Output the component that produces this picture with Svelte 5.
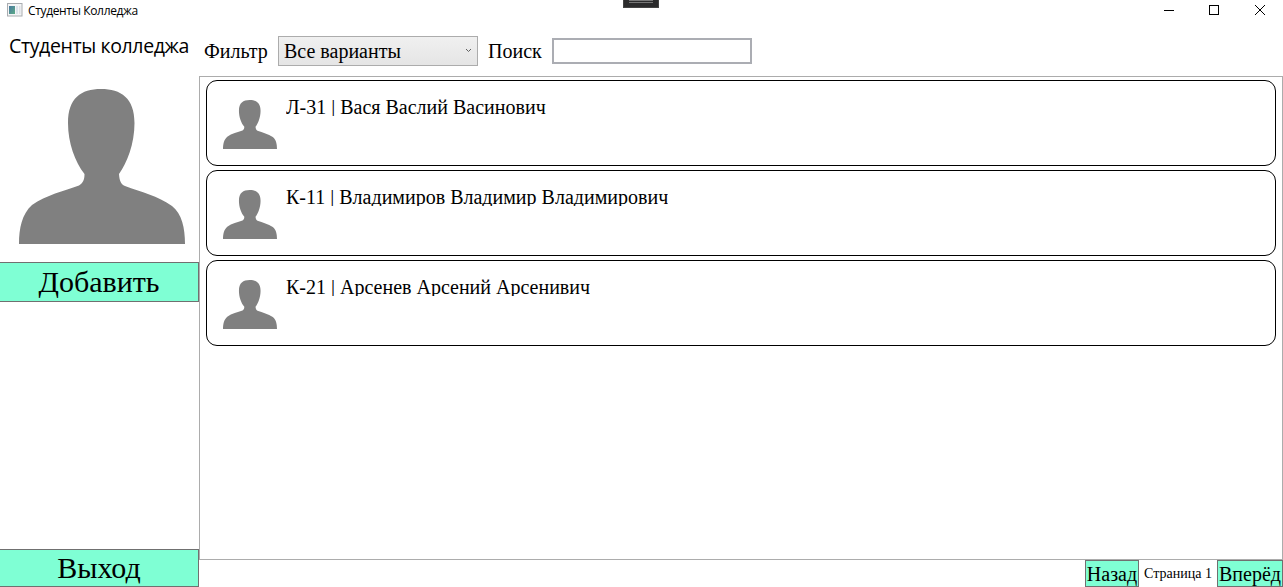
<script>
  const students = [
    'Л-31 | Вася Васлий Васинович',
    'К-11 | Владимиров Владимир Владимирович',
    'К-21 | Арсенев Арсений Арсенивич'
  ];
  let search = $state('');
</script>

{#snippet person(cls)}
  <svg class={cls} viewBox="0 0 166 155" preserveAspectRatio="none" aria-hidden="true">
    <path fill="#808080" d="M82 0C102 0 115.500 9 115.500 34C115.500 55 108 74 100 85C100.500 91 101.500 95 106 97C122 103 139 107 153 117C163 125 166 139 166 155H0C0 139 3 125 13 116C27 106 45 102 60 96.500C64 94 65.500 91 65.500 85C56 73 49 54 49 34C49 9 62 0 82 0Z" />
  </svg>
{/snippet}

<div class="window">
  <header class="titlebar">
    <svg class="app-icon" viewBox="0 0 16 14" aria-hidden="true">
      <defs>
        <linearGradient id="pane" x1="0" y1="0" x2="1" y2="1">
          <stop offset="0" stop-color="#4878a0" />
          <stop offset="1" stop-color="#5cab86" />
        </linearGradient>
      </defs>
      <rect x="0.500" y="0.500" width="14.500" height="12.500" fill="#f4f5f6" stroke="#a9acb0" />
      <rect x="2" y="3" width="6" height="8" fill="url(#pane)" />
      <rect x="9" y="3" width="2" height="8" fill="#dbe3eb" />
      <rect x="12" y="3" width="1.500" height="8" fill="#dde1e5" />
    </svg>
    <span class="caption">Студенты Колледжа</span>
    <div class="handle"><i></i></div>
    <svg class="controls" viewBox="0 0 138 21" fill="none" stroke="#000" aria-hidden="true">
      <path d="M19 10.500H29M64.500 5.500H73.500V14.500H64.500Z" shape-rendering="crispEdges" />
      <path d="M110 5L120 15M120 5L110 15" />
    </svg>
  </header>
  <div class="body">
    <aside>
      <h1>Студенты колледжа</h1>
      {@render person('portrait')}
      <button class="add"><span>Добавить</span></button>
      <button class="exit"><span>Выход</span></button>
    </aside>
    <main>
      <div class="toolbar">
        <span class="label filter">Фильтр</span>
        <button class="combo">
          <span>Все варианты</span>
          <svg viewBox="0 0 7 5" aria-hidden="true"><path d="M1 1L3.500 3.500L6 1" fill="none" stroke="#606060" /></svg>
        </button>
        <span class="label find">Поиск</span>
        <input aria-label="Поиск" bind:value={search} />
      </div>
      <div class="list">
        {#each students as student}
          <article>
            {@render person('thumb')}
            <div class="name">{student}</div>
          </article>
        {/each}
      </div>
      <footer>
        <button class="back"><span>Назад</span></button>
        <span class="page">Страница 1</span>
        <button class="next"><span>Вперёд</span></button>
      </footer>
    </main>
  </div>
</div>

<style>
  :global(body) { margin: 0; background: #fff; overflow: hidden; }
  .window {
    width: 1283px; height: 587px; display: flex; flex-direction: column;
    background: #fff; color: #000; font-family: "Liberation Serif", serif;
    white-space: nowrap; overflow: hidden;
  }
  .titlebar { height: 21px; display: flex; position: relative; flex: none; }
  .app-icon { width: 16px; height: 14px; margin: 3px 0 0 7px; }
  .caption { margin-left: 5px; font: 12px/21px "Open Sans", sans-serif; letter-spacing: -0.350px; }
  .handle {
    position: absolute; left: 623px; top: 0; width: 36px; height: 8px;
    box-sizing: border-box; background: #2b2b2c; border: 1px solid #444; border-top: 0;
  }
  .handle i { display: block; width: 24px; height: 1px; margin: 0 auto; border-top: 1px solid #777; border-bottom: 1px solid #777; }
  .controls { width: 138px; height: 21px; margin-left: auto; }
  .body { flex: 1; min-height: 0; display: flex; }
  aside { width: 199px; display: flex; flex-direction: column; flex: none; }
  h1 { margin: 10px 0 0 9px; font: 19.500px/30px "Open Sans", sans-serif; height: 30px; letter-spacing: -0.380px; }
  .portrait { width: 166px; height: 155px; margin: 28px 0 0 19px; flex: none; }
  button {
    box-sizing: border-box; padding: 0; border: 1px solid #707070; border-radius: 0;
    background: #7fffd4; color: #000; font-family: inherit; white-space: nowrap;
    display: flex; align-items: center; justify-content: center;
  }
  .add, .exit { width: 199px; border-left: 0; font-size: 30px; line-height: 34px; }
  .add { height: 40px; margin-top: 18px; }
  .exit { height: 38px; margin-top: auto; }
  main { flex: 1; min-width: 0; display: flex; flex-direction: column; }
  .toolbar { height: 55px; display: flex; align-items: flex-start; }
  .label { font-size: 20px; line-height: 22px; margin-top: 19px; }
  .filter { width: 74px; margin-left: 5px; }
  .find { width: 64px; margin-left: 10px; }
  .combo {
    width: 200px; height: 30px; margin-top: 15px; padding: 0 5px;
    justify-content: space-between; border-color: #acacac;
    background: linear-gradient(#f0f0f0, #e5e5e5); font-size: 20px;
  }
  .combo svg { width: 7px; height: 5px; margin-bottom: 1px; }
  input { box-sizing: border-box; width: 200px; height: 26px; margin-top: 17px; padding: 0 3px; border: 2px solid #abadb3; border-radius: 0; font: 18px "Liberation Serif", serif; outline: 0; }
  .list {
    box-sizing: border-box; height: 484px; border: 1px solid #acacac; padding: 3px 6px;
    display: flex; flex-direction: column; gap: 4px;
  }
  article { box-sizing: border-box; height: 86px; flex: none; border: 1px solid #000; border-radius: 11px; display: flex; align-items: flex-start; padding-left: 16px; }
  .thumb { width: 54px; height: 49px; margin-top: 19px; }
  .name { font-size: 20px; line-height: 22px; height: 20px; margin: 15px 0 0 9px; overflow: hidden; }
  footer { height: 27px; display: flex; justify-content: flex-end; align-items: center; }
  footer button { height: 27px; font-size: 20px; line-height: 22px; padding-top: 1px; padding-bottom: 1px; }
  .back { width: 54px; }
  .next { width: 66px; }
  .page { width: 78px; text-align: center; font-size: 14px; }
</style>
